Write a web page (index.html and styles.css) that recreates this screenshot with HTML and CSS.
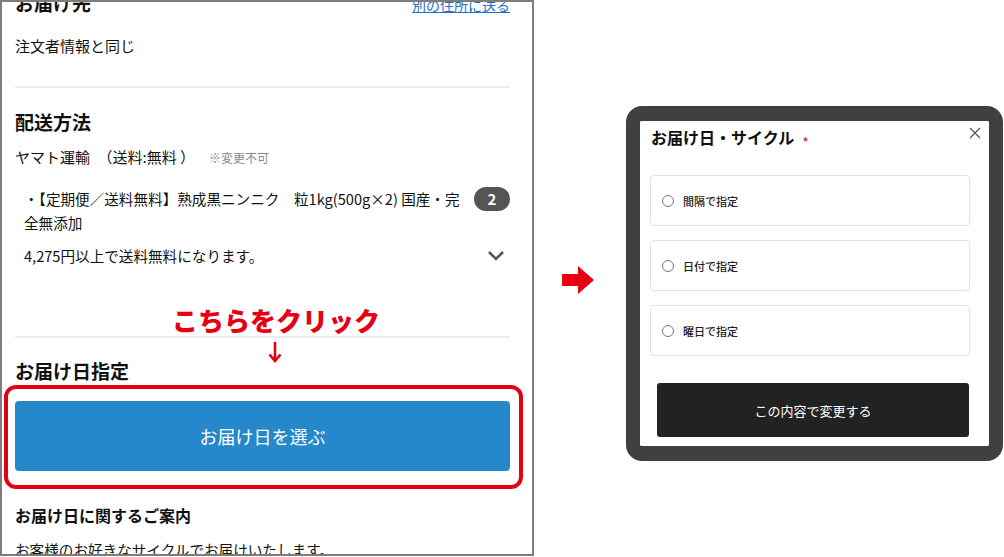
FILE: index.html
```html
<!DOCTYPE html>
<html lang="ja">
<head>
<meta charset="UTF-8">
<meta name="viewport" content="width=device-width, initial-scale=1.0">
<title>お届け日の指定方法</title>
<link rel="stylesheet" href="styles.css">
</head>
<body>
<div class="page">
  <div class="screen">
    <div class="screen-body">
      <section class="block">
        <div class="block-head">
          <h2 class="title">お届け先</h2>
          <a class="link" href="#">別の住所に送る</a>
        </div>
        <p class="text addr">注文者情報と同じ</p>
      </section>

      <section class="block ship">
        <h2 class="title ship-title">配送方法</h2>
        <p class="text carrier">ヤマト運輸　（送料:無料 ）<span class="note">※変更不可</span></p>
        <div class="item">
          <p class="item-name">・【定期便／送料無料】熟成黒ニンニク　粒1kg(500g×2) 国産・完全無添加</p>
          <span class="badge">2</span>
        </div>
        <div class="free">
          <p class="item-name">4,275円以上で送料無料になります。</p>
          <svg class="chevron" width="18" height="12" viewBox="0 0 18 12">
            <path d="M2 2 L9 9 L16 2" fill="none" stroke="#555" stroke-width="2.6"/>
          </svg>
        </div>
      </section>

      <section class="block date">
        <h2 class="title date-title">お届け日指定</h2>
        <button class="pick">お届け日を選ぶ</button>
        <h3 class="sub">お届け日に関するご案内</h3>
        <p class="guide">お客様のお好きなサイクルでお届けいたします。</p>
      </section>
    </div>

    <!-- callouts drawn over the page -->
    <div class="callout">こちらをクリック</div>
    <svg class="down" width="14" height="22" viewBox="0 0 14 22">
      <path d="M7 1 V20 M1.5 13.5 L7 20 L12.5 13.5" fill="none" stroke="#e50012" stroke-width="2.6"/>
    </svg>
    <div class="ring"></div>
  </div>

  <svg class="next" width="32" height="28" viewBox="0 0 32 28">
    <path d="M0 8 H16 V0 L32 14 L16 28 V20 H0 Z" fill="#e50012"/>
  </svg>

  <div class="modal">
    <div class="modal-inner">
      <div class="modal-head">
        <h2 class="modal-title">お届け日・サイクル</h2>
        <span class="req">*</span>
        <svg class="close" width="12" height="12" viewBox="0 0 12 12">
          <path d="M1 1 L11 11 M11 1 L1 11" stroke="#555" stroke-width="1.3"/>
        </svg>
      </div>
      <div class="options">
        <label class="option"><span class="radio"></span>間隔で指定</label>
        <label class="option"><span class="radio"></span>日付で指定</label>
        <label class="option"><span class="radio"></span>曜日で指定</label>
      </div>
      <button class="submit">この内容で変更する</button>
    </div>
  </div>
</div>
</body>
</html>
```

FILE: styles.css
```css
* {
  box-sizing: border-box;
}

body {
  margin: 0;
  background: #fff;
  font-family: "Noto Sans CJK JP", "Noto Sans", sans-serif;
  color: #111;
}

.page {
  display: flex;
  align-items: flex-start;
  width: 1004px;
  height: 557px;
  overflow: hidden;
}

/* left: phone screen */
.screen {
  position: relative;
  flex: none;
  width: 534px;
  height: 556px;
  border: 2px solid #7d7d7d;
  overflow: hidden;
}

.screen-body {
  margin-top: -11px;
  padding: 0 22px 0 13px;
}

.block {
  border-bottom: 2px solid #eee;
  padding-bottom: 28px;
}

.block-head {
  display: flex;
  justify-content: space-between;
  align-items: baseline;
}

.title {
  margin: 0;
  font-size: 19px;
  line-height: 24px;
  font-weight: 700;
}

.link {
  font-size: 14px;
  color: #1f6fc5;
  text-decoration: underline;
}

.text {
  margin: 0;
  font-size: 15px;
  line-height: 24px;
}

.addr {
  margin-top: 19px;
}

.ship {
  padding-bottom: 68px;
}

.ship-title {
  margin-top: 22px;
}

.carrier {
  margin-top: 11px;
}

.note {
  margin-left: 14px;
  font-size: 12px;
  color: #888;
}

.item,
.free {
  display: flex;
  align-items: flex-start;
  gap: 8px;
  padding-left: 9px;
}

.item {
  margin-top: 17px;
}

.free {
  align-items: center;
  margin-top: 9px;
}

.item-name {
  flex: 1;
  margin: 0;
  font-size: 14.6px;
  line-height: 24px;
}

.badge {
  flex: none;
  width: 36px;
  height: 24px;
  border-radius: 12px;
  background: #555;
  color: #fff;
  font-size: 15px;
  font-weight: 700;
  line-height: 24px;
  text-align: center;
}

.chevron {
  flex: none;
  margin-right: 5px;
}

.date {
  border-bottom: 0;
}

.date-title {
  margin-top: 21px;
}

.pick {
  display: block;
  width: 100%;
  height: 70px;
  margin-top: 18px;
  border: 0;
  border-radius: 4px;
  background: #2488ca;
  color: #fff;
  font-family: inherit;
  font-size: 18px;
}

.sub {
  margin: 32px 0 0;
  font-size: 16px;
  line-height: 24px;
  font-weight: 700;
}

.guide {
  margin: 11px 0 0;
  font-size: 14.6px;
  line-height: 24px;
}

.callout {
  position: absolute;
  top: 301px;
  left: 170px;
  color: #e50012;
  font-size: 26px;
  font-weight: 900;
  line-height: 34px;
}

.down {
  position: absolute;
  top: 339px;
  left: 266px;
}

.ring {
  position: absolute;
  top: 383px;
  left: 2px;
  width: 519px;
  height: 104px;
  border: 4px solid #e50012;
  border-radius: 12px;
}

/* middle arrow */
.next {
  flex: none;
  margin: 266px 0 0 28px;
}

/* right: modal */
.modal {
  flex: none;
  width: 377px;
  height: 355px;
  margin: 106px 0 0 32px;
  border: 14px solid #404040;
  border-top-width: 15px;
  border-bottom-width: 15px;
  border-radius: 16px;
  background: #fff;
}

.modal-inner {
  padding: 4px 19px 0 10px;
}

.modal-head {
  position: relative;
  display: flex;
  align-items: center;
}

.modal-title {
  margin: 0 0 0 1px;
  font-size: 16px;
  line-height: 22px;
  font-weight: 700;
}

.req {
  margin: 10px 0 0 8px;
  color: #e4007f;
  font-size: 14px;
  line-height: 14px;
}

.close {
  position: absolute;
  top: 2px;
  right: -11px;
}

.options {
  display: flex;
  flex-direction: column;
  gap: 14px;
  margin-top: 26px;
}

.option {
  display: flex;
  align-items: center;
  height: 51px;
  padding-left: 11px;
  border: 1px solid #e2e2e2;
  border-radius: 4px;
  font-size: 11px;
  font-weight: 500;
  color: #222;
}

.radio {
  width: 12px;
  height: 12px;
  margin-right: 9px;
  border: 1px solid #777;
  border-radius: 50%;
}

.submit {
  display: block;
  width: 312px;
  height: 54px;
  margin: 27px 0 0 7px;
  border: 0;
  border-radius: 3px;
  background: #222;
  color: #fff;
  font-family: inherit;
  font-size: 13px;
}
```
